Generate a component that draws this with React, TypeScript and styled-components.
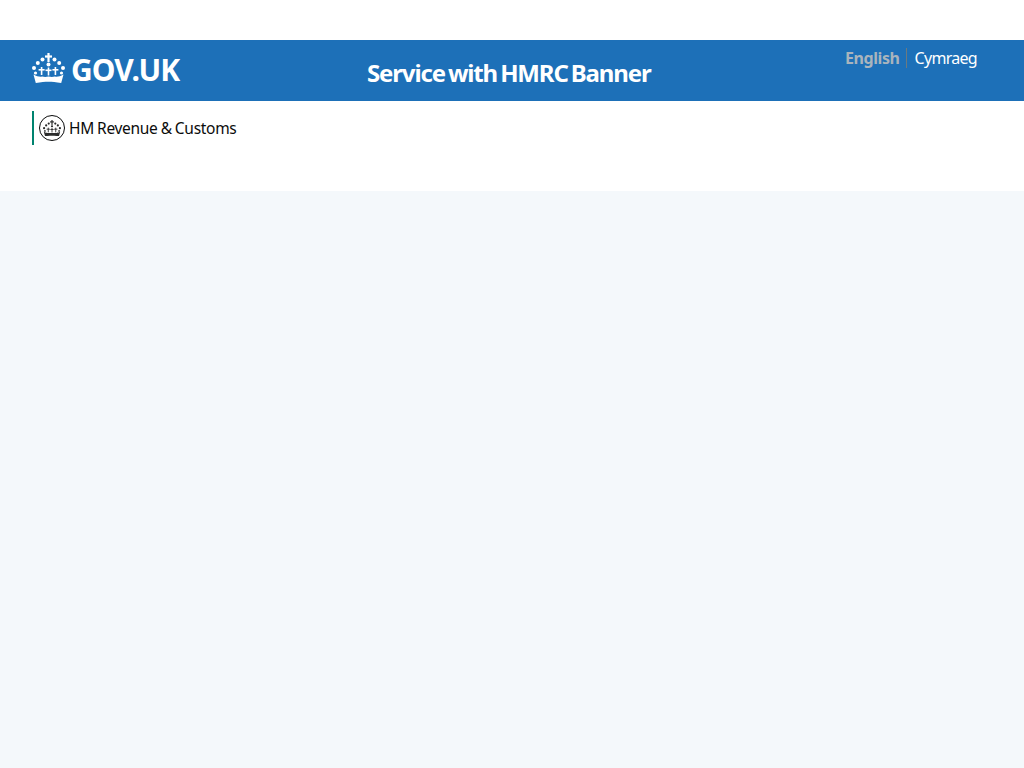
import styled, { createGlobalStyle } from "styled-components";

const GlobalStyle = createGlobalStyle`
  html, body {
    margin: 0;
    padding: 0;
    background: #f4f8fb;
  }
`;

const Page = styled.div`
  min-height: 768px;
  display: flex;
  flex-direction: column;
  font-family: "Noto Sans", "Liberation Sans", Arial, sans-serif;
  background: #f4f8fb;
`;

const Header = styled.header`
  background: #fff;
  padding-top: 40px;
  height: 191px;
  box-sizing: border-box;
`;

const Banner = styled.div`
  height: 61px;
  background: #1d70b8;
  color: #fff;
  display: grid;
  grid-template-columns: 335px 1fr auto;
  padding: 0 47px 0 32px;
`;

const Logo = styled.a`
  display: flex;
  align-items: flex-start;
  gap: 6px;
  padding-top: 13px;
  color: #fff;
  font-size: 30px;
  line-height: 34px;
  font-weight: 700;
  letter-spacing: -0.9px;
`;

const ServiceName = styled.div`
  font-size: 24px;
  line-height: 30px;
  font-weight: 700;
  padding-top: 18px;
  letter-spacing: -1.15px;
  word-spacing: -2px;
  white-space: nowrap;
`;

const LangList = styled.ul`
  list-style: none;
  margin: 8px 0 0;
  padding: 0;
  display: flex;
  align-items: flex-start;
  font-size: 16px;
  line-height: 20px;
`;

const LangItem = styled.li<{ $active?: boolean }>`
  font-weight: ${(p) => (p.$active ? 700 : 400)};
  color: ${(p) => (p.$active ? "#a9b4bd" : "#fff")};
  letter-spacing: ${(p) => (p.$active ? "-0.4px" : "-0.7px")};
  padding: 0 ${(p) => (p.$active ? "6px" : "0")} 0 ${(p) => (p.$active ? "0" : "8px")};
  border-right: ${(p) => (p.$active ? "1px solid #6b7a80" : "none")};
`;

const OrgRow = styled.div`
  padding: 10px 32px 0;
`;

const Org = styled.div`
  display: flex;
  align-items: center;
  gap: 4px;
  height: 34px;
  border-left: 2px solid #00836f;
  padding-left: 5px;
  color: #0b0c0c;
  font-size: 15.5px;
  letter-spacing: -0.3px;
  word-spacing: -0.6px;
`;

const Crown = ({ size, color }: { size: number; color: string }) => (
  <svg width={size} height={(size * 30) / 33} viewBox="0 0 33 30" fill={color} aria-hidden="true">
    <rect x="15.4" y="0" width="2.2" height="9" />
    <rect x="13" y="2.4" width="7" height="2.2" />
    <circle cx="10.5" cy="6.5" r="2" />
    <circle cx="22.5" cy="6.5" r="2" />
    <circle cx="5.8" cy="10" r="2" />
    <circle cx="27.2" cy="10" r="2" />
    <circle cx="2" cy="15" r="2" />
    <circle cx="31" cy="15" r="2" />
    <circle cx="16.5" cy="11.5" r="2" />
    <circle cx="3.5" cy="20" r="1.6" />
    <circle cx="29.5" cy="20" r="1.6" />
    <rect x="8.8" y="14" width="1.6" height="8" />
    <rect x="6.6" y="16" width="6" height="1.6" />
    <rect x="15.7" y="14.5" width="1.6" height="8" />
    <rect x="13.5" y="16.5" width="6" height="1.6" />
    <rect x="22.6" y="14" width="1.6" height="8" />
    <rect x="20.4" y="16" width="6" height="1.6" />
    <path d="M1.5 21.5 C5 23.5 8 24 10 23.5 C12.5 24.2 14.5 24 16.5 23.5 C18.5 24 20.5 24.2 23 23.5 C25 24 28 23.5 31.5 21.5 L29.2 30 C24 29 20 28.7 16.5 28.7 C13 28.7 9 29 3.8 30 Z" />
  </svg>
);

const OrgBadge = styled.span`
  width: 26px;
  height: 26px;
  box-sizing: border-box;
  border: 1.5px solid #0b0c0c;
  border-radius: 50%;
  display: flex;
  align-items: center;
  justify-content: center;
  flex-shrink: 0;
`;

export default function App() {
  return (
    <>
      <GlobalStyle />
      <Page>
        <Header>
          <Banner>
            <Logo>
              <Crown size={33} color="#fff" />
              GOV.UK
            </Logo>
            <ServiceName>Service with HMRC Banner</ServiceName>
            <LangList>
              <LangItem $active>English</LangItem>
              <LangItem>Cymraeg</LangItem>
            </LangList>
          </Banner>
          <OrgRow>
            <Org>
              <OrgBadge>
                <Crown size={18} color="#2a2b2b" />
              </OrgBadge>
              HM Revenue &amp; Customs
            </Org>
          </OrgRow>
        </Header>
      </Page>
    </>
  );
}
